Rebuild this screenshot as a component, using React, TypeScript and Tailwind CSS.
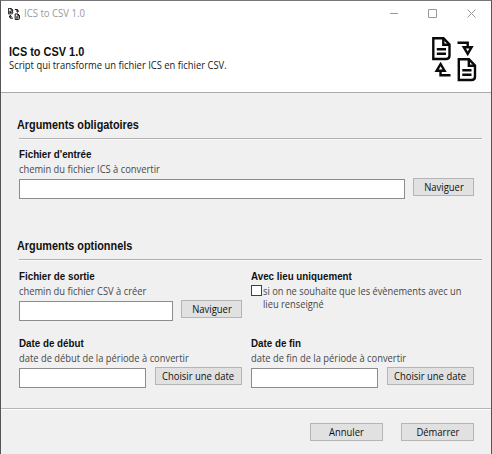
import React from "react";

const ui = "font-['Open_Sans','Noto_Sans',sans-serif] whitespace-nowrap";
const bold = "font-['Liberation_Sans',Arial,sans-serif] font-bold whitespace-nowrap text-[#101010] origin-left";

function Sheet({ x, y }: { x: number; y: number }) {
  return (
    <g transform={`translate(${x} ${y})`}>
      <path d="M1.3 1.3H11.5L17.5 7.5V18.5Q17.5 22 14 22H1.3Z" />
      <path d="M11.3 1.5V7.7H17.5" />
      <path d="M4.8 12.3H14M4.8 16.7H14" />
    </g>
  );
}

function Logo({ className, weight }: { className: string; weight: number }) {
  return (
    <svg viewBox="0 0 45 45" className={className} fill="none" stroke="#0a0a0a" strokeWidth={weight}>
      <Sheet x={0} y={0} />
      <Sheet x={25.5} y={21} />
      <path d="M25.5 5.7H35.7V10M31.8 10.2H39.6L35.7 16.8Z" />
      <path d="M18.5 38.3H8.5V34M4.6 33.8H12.6L8.6 27Z" />
    </svg>
  );
}

function Button({ label, className }: { label: string; className: string }) {
  return (
    <button
      type="button"
      className={`flex h-[18px] shrink-0 items-center justify-center border border-[#b5b5b5] bg-[#e1e1e1] text-[10.5px] leading-none text-[#101010] ${ui} ${className}`}
    >
      <span className="inline-block scale-x-[0.9]">{label}</span>
    </button>
  );
}

function Section({ title, className }: { title: string; className: string }) {
  return (
    <div className={className}>
      <h2 className={`-ml-0.5 h-5 scale-x-[0.905] text-[12px] leading-[14px] ${bold}`}>{title}</h2>
      <div className="h-px bg-[#b0b0b0]" />
      <div className="h-px bg-[#fafafa]" />
    </div>
  );
}

type FieldProps = {
  title: string;
  hint: string;
  input: string;
  children: React.ReactNode;
};

function FieldTitle({ children }: { children: string }) {
  return <div className={`h-[15px] scale-x-[0.89] text-[11px] leading-[15px] ${bold}`}>{children}</div>;
}

function Field({ title, hint, input, children }: FieldProps) {
  return (
    <div className="flex flex-col">
      <FieldTitle>{title}</FieldTitle>
      <div className={`h-4 origin-left scale-x-[0.89] text-[10.5px] leading-[15px] text-[#484848] ${ui}`}>{hint}</div>
      <div className="flex items-start justify-between">
        <input className={`mt-px h-5 border border-[#8c8c8c] bg-white outline-none ${input}`} />
        {children}
      </div>
    </div>
  );
}

export default function App() {
  return (
    <div className="flex h-[454px] w-[492px] flex-col overflow-hidden border-x border-t border-x-[#555] border-t-[#777] bg-[#f0f0f0]">
      <header className="flex h-[92px] shrink-0 flex-col border-b border-[#aaa] bg-white">
        <div className="flex h-[25px] items-center pl-[7px]">
          <Logo className="h-3 w-3" weight={3.6} />
          <span className={`ml-1 inline-block origin-left scale-x-[0.91] text-[10.5px] leading-none text-[#999] ${ui}`}>ICS to CSV 1.0</span>
          <svg width="88" height="10" viewBox="0 0 88 10" className="mr-[14px] ml-auto" fill="none" stroke="#999" strokeWidth="1">
            <path d="M1 4.5H9M39.5 .5H47.5V8.5H39.5ZM78.5 .5L86.5 8.5M86.5 .5L78.5 8.5" />
          </svg>
        </div>
        <div className="flex justify-between pr-[14px] pl-2">
          <div className="pt-[20px]">
            <h1 className={`scale-x-[0.91] text-[12px] leading-[13px] ${bold}`}>ICS to CSV 1.0</h1>
            <p className={`origin-left scale-x-[0.895] text-[10.5px] leading-[13px] text-[#202020] ${ui}`}>
              Script qui transforme un fichier ICS en fichier CSV.
            </p>
          </div>
          <Logo className="mt-[11px] h-[45px] w-[45px]" weight={2.4} />
        </div>
      </header>
      <main className="flex h-[316px] shrink-0 flex-col border-b border-[#b5b5b5] pr-[9px] pl-[18px]">
        <Section title="Arguments obligatoires" className="mt-[25px]" />
        <div className="mt-[7px] w-[455px]">
          <Field title="Fichier d'entrée" hint="chemin du fichier ICS à convertir" input="w-[386px]">
            <Button label="Naviguer" className="w-[61px]" />
          </Field>
        </div>
        <Section title="Arguments optionnels" className="mt-10" />
        <div className="mt-[8px] grid w-[455px] grid-cols-[223px_223px] gap-x-[9px] gap-y-[15px]">
          <Field title="Fichier de sortie" hint="chemin du fichier CSV à créer" input="w-[154px]">
            <Button label="Naviguer" className="w-[61px]" />
          </Field>
          <div>
            <FieldTitle>Avec lieu uniquement</FieldTitle>
            <label className="flex items-start">
              <span className="mt-px mr-px h-[11px] w-[11px] shrink-0 border border-[#404040] bg-white" />
              <span className={`inline-block origin-left scale-x-[0.885] pt-px text-[10.5px] leading-[12.5px] text-[#484848] ${ui}`}>
                si on ne souhaite que les évènements avec un
                <br />
                lieu renseigné
              </span>
            </label>
          </div>
          <Field title="Date de début" hint="date de début de la période à convertir" input="w-[127px]">
            <Button label="Choisir une date" className="w-[87px]" />
          </Field>
          <Field title="Date de fin" hint="date de fin de la période à convertir" input="w-[127px]">
            <Button label="Choisir une date" className="w-[87px]" />
          </Field>
        </div>
      </main>
      <footer className="flex flex-1 justify-end gap-[18px] border-t border-white pt-[13px] pr-[17px]">
        <Button label="Annuler" className="w-[73px]" />
        <Button label="Démarrer" className="w-[73px]" />
      </footer>
    </div>
  );
}
